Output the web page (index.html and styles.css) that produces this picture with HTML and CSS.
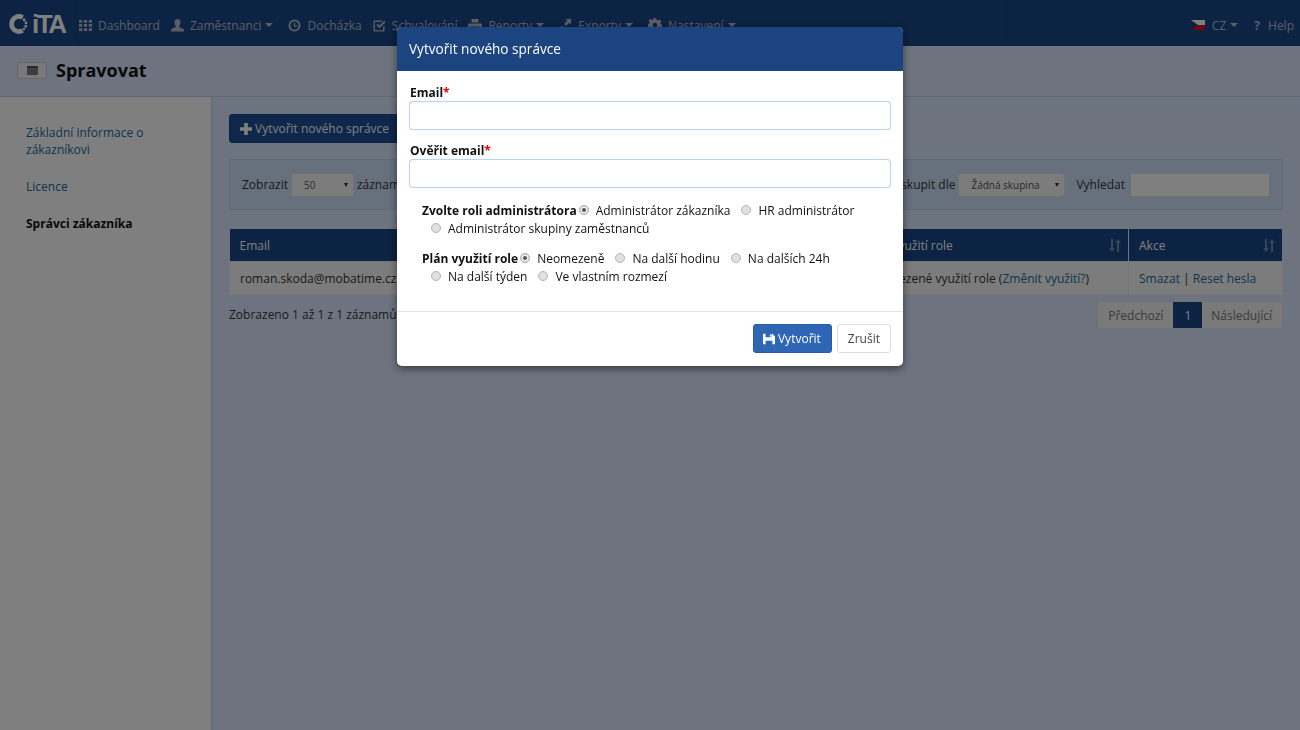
FILE: index.html
```html
<!DOCTYPE html>
<html lang="cs">

<head>
    <meta charset="UTF-8">
    <title>Spravovat</title>
    <link rel="stylesheet" href="styles.css">
</head>

<body>
    <nav class="topnav">
        <div class="brand">
            <svg class="brand-ring" viewBox="0 0 20 20" width="20" height="20">
                <path d="M13.800 3.500A7.500 7.500 0 1 0 13.800 16.500" fill="none" stroke="#fff" stroke-width="4.600" />
                <circle cx="15.200" cy="6" r="1.400" fill="#fff" />
                <circle cx="17" cy="9" r="1.400" fill="#fff" />
                <circle cx="16.800" cy="12.300" r="1.400" fill="#fff" />
                <circle cx="15" cy="15" r="1.200" fill="#fff" />
            </svg>
            <span class="brand-text">iTA</span>
        </div>
        <ul class="menu">
            <li>
                <svg class="ico" viewBox="0 0 12 12"><path d="M0 1h3v2.500H0zM4.500 1h3v2.500h-3zM9 1h3v2.500H9zM0 4.700h3v2.500H0zM4.500 4.700h3v2.500h-3zM9 4.700h3v2.500H9zM0 8.500h3V11H0zM4.500 8.500h3V11h-3zM9 8.500h3V11H9z" /></svg>
                Dashboard
            </li>
            <li>
                <svg class="ico" viewBox="0 0 14 14"><path d="M7 0c2 0 3.200 1.500 3.200 3.500S9 7.500 8.600 8.300c0 .8 5.400 1.600 5.400 3.700v1.500H0V12c0-2.100 5.400-2.900 5.400-3.700C5 7.500 3.800 5.500 3.800 3.500S5 0 7 0z" /></svg>
                Zaměstnanci <i class="caret"></i>
            </li>
            <li>
                <svg class="ico" viewBox="0 0 14 14"><path fill-rule="evenodd" d="M7 .5a6.500 6.500 0 1 1 0 13 6.500 6.500 0 0 1 0-13zm0 2a4.500 4.500 0 1 0 0 9 4.500 4.500 0 0 0 0-9zM6.300 4h1.400v3h2.300v1.300H6.300z" /></svg>
                Docházka
            </li>
            <li>
                <svg class="ico" viewBox="0 0 14 14"><path d="M2.500 1.500H10l-1.500 1.700h-6a.5.5 0 0 0-.5.500v7.800c0 .3.200.5.500.5h7.800c.3 0 .5-.2.500-.5V8.500L12.500 7v4.800c0 1-.8 1.700-1.700 1.700H2.200c-1 0-1.700-.7-1.700-1.700V3.200c0-1 .8-1.700 2-1.700z" /><path d="M3.500 6.500 5 5l2 2 5-5 1.500 1.500L7 10z" /></svg>
                Schvalování
            </li>
            <li>
                <svg class="ico ico-wide" viewBox="0 0 14 14"><path d="M3.500 1h7v3.500h-7zM0 5.500h14V11h-2.500V8.500h-9V11H0zM3.500 9.500h7V13h-7z" /></svg>
                Reporty <i class="caret"></i>
            </li>
            <li>
                <svg class="ico" viewBox="0 0 14 14"><path d="M7 0h6v6l-2-2-3.500 3.500-2-2L9 2zM1 8h4v2h5v3H1z" /></svg>
                Exporty <i class="caret"></i>
            </li>
            <li>
                <svg class="ico ico-wide" viewBox="0 0 14 14"><path fill-rule="evenodd" d="M5.800 0h2.400l.4 2 1.300.6 1.800-1.100 1.700 1.700-1.100 1.800.6 1.300 2 .4v2.400l-2 .4-.6 1.300 1.100 1.800-1.700 1.700-1.800-1.100-1.300.5-.4 2H5.800l-.4-2-1.300-.5-1.800 1.100L.6 12.100l1.100-1.800-.6-1.300-2-.4V6.200l2-.4.6-1.300L.6 2.700l1.700-1.700 1.800 1.100 1.300-.6zM7 4.800a2.200 2.200 0 1 0 0 4.400 2.200 2.200 0 0 0 0-4.400z" /></svg>
                Nastavení <i class="caret"></i>
            </li>
        </ul>
        <ul class="menu menu-right">
            <li class="lang-item">
                <svg class="flag" viewBox="0 0 14 10" width="14" height="10"><path fill="#fff" d="M0 0h14v5H0z" /><path fill="#d7141a" d="M0 5h14v5H0z" /><path fill="#11457e" d="M0 0l7 5-7 5z" /></svg>
                CZ <i class="caret"></i>
            </li>
            <li class="help-item"><b class="help-mark">?</b> Help</li>
        </ul>
    </nav>

    <header class="pagehead">
        <span class="pagehead-btn">
            <svg viewBox="0 0 11 9" width="11" height="9"><path fill="#505050" d="M0 0h11v2.500H0z" /><path fill="#787878" d="M0 2.500h11V9H0z" /></svg>
        </span>
        <h1>Spravovat</h1>
    </header>

    <div class="page">
        <aside class="side">
            <a class="side-link">Základní informace o zákazníkovi</a>
            <a class="side-link">Licence</a>
            <a class="side-link active">Správci zákazníka</a>
        </aside>

        <main class="content">
            <button class="btn-new" type="button">
                <svg viewBox="0 0 12 12" width="12" height="12"><path fill="#fff" d="M4.200 0h3.600v4.200H12v3.600H7.800V12H4.200V7.800H0V4.200h4.200z" /></svg>
                Vytvořit nového správce
            </button>

            <div class="filters">
                <label>Zobrazit</label>
                <span class="fake-select sel-small">50 <i class="sel-arrow"></i></span>
                <label>záznamů</label>
                <span class="filters-gap"></span>
                <label>Seskupit dle</label>
                <span class="fake-select sel-wide">Žádná skupina <i class="sel-arrow"></i></span>
                <label class="search-label">Vyhledat</label>
                <span class="search-box"></span>
            </div>

            <table class="grid">
                <thead>
                    <tr>
                        <th class="col-email">Email</th>
                        <th class="col-role"></th>
                        <th class="col-plan">
                            Plán využití role
                            <svg class="sort" viewBox="0 0 12 13" width="12" height="13"><path d="M2 0h2v9h2l-3 4-3-4h2zM8 13h2V4h2L9 0 6 4h2z" /></svg>
                        </th>
                        <th class="col-act">
                            Akce
                            <svg class="sort" viewBox="0 0 12 13" width="12" height="13"><path d="M2 0h2v9h2l-3 4-3-4h2zM8 13h2V4h2L9 0 6 4h2z" /></svg>
                        </th>
                    </tr>
                </thead>
                <tbody>
                    <tr>
                        <td>roman.skoda@mobatime.cz</td>
                        <td></td>
                        <td>Neomezené využití role (<a>Změnit využití?</a>)</td>
                        <td><a>Smazat</a> | <a>Reset hesla</a></td>
                    </tr>
                </tbody>
            </table>

            <div class="tablefoot">
                <span class="tableinfo">Zobrazeno 1 až 1 z 1 záznamů</span>
                <div class="pager">
                    <span class="pager-item">Předchozí</span>
                    <span class="pager-item current">1</span>
                    <span class="pager-item">Následující</span>
                </div>
            </div>
        </main>
    </div>

    <div class="backdrop"></div>

    <div class="modal">
        <div class="modal-head">Vytvořit nového správce</div>
        <form class="modal-body">
            <label class="field-label" for="eml">Email<span class="req">*</span></label>
            <input class="field" id="eml" type="email">
            <label class="field-label" for="eml2">Ověřit email<span class="req">*</span></label>
            <input class="field" id="eml2" type="email">

            <div class="radios">
                <div class="radio-row">
                    <b>Zvolte roli administrátora</b>
                    <label class="radio first"><i class="dot on"></i>Administrátor zákazníka</label>
                    <label class="radio"><i class="dot"></i>HR administrátor</label>
                </div>
                <div class="radio-row wrapped">
                    <label class="radio"><i class="dot"></i>Administrátor skupiny zaměstnanců</label>
                </div>
            </div>
            <div class="radios">
                <div class="radio-row">
                    <b>Plán využití role</b>
                    <label class="radio first"><i class="dot on"></i>Neomezeně</label>
                    <label class="radio"><i class="dot"></i>Na další hodinu</label>
                    <label class="radio"><i class="dot"></i>Na dalších 24h</label>
                </div>
                <div class="radio-row wrapped">
                    <label class="radio"><i class="dot"></i>Na další týden</label>
                    <label class="radio"><i class="dot"></i>Ve vlastním rozmezí</label>
                </div>
            </div>
        </form>
        <div class="modal-foot">
            <button class="btn-save" type="button">
                <svg viewBox="0 0 14 14" width="12" height="12"><path fill="#fff" fill-rule="evenodd" d="M0 1h11l3 3v9H0zm3 0v4h7V1zm5 .8h1.500v2.500H8zM3 9v4h8V9z" /></svg>
                Vytvořit
            </button>
            <button class="btn-cancel" type="button">Zrušit</button>
        </div>
    </div>
</body>

</html>
```

FILE: styles.css
```css
html,
body {
    height: 100%;
}

body {
    margin: 0;
    background-color: #dde9ff;
    font-family: 'Open Sans', sans-serif;
    font-size: 12px;
    color: #333;
    overflow: hidden;
}

a {
    color: #1a6a99;
}

/* top bar */

.topnav {
    display: flex;
    height: 46px;
    background-color: #1a4686;
}

.brand {
    display: flex;
    align-items: center;
    width: 73px;
    height: 46px;
    padding-left: 9px;
    box-sizing: border-box;
    border-right: 1px solid #1d4a8c;
    flex-shrink: 0;
}

.brand-ring {
    margin-top: 1px;
}

.brand-text {
    margin-left: 3px;
    margin-top: 1px;
    font-family: 'Liberation Sans', sans-serif;
    font-size: 26px;
    font-weight: bold;
    letter-spacing: -2.500px;
    line-height: 26px;
    color: #fff;
}

.menu {
    display: flex;
    align-items: center;
    list-style: none;
    margin: 0;
    padding: 4px 0 0 6px;
    color: #b4bccc;
}

.menu li {
    display: flex;
    align-items: center;
    margin-right: 11px;
    white-space: nowrap;
}

.menu-right {
    justify-content: flex-end;
    box-sizing: border-box;
    width: 299px;
    margin-left: auto;
    padding-left: 0;
    border-left: 1px solid #1d4a8c;
}

.menu-right .lang-item {
    margin-right: 12px;
}

.menu-right .help-item {
    margin-right: 6px;
}

.help-mark {
    margin-right: 8px;
    font-size: 12px;
}

.ico {
    width: 13px;
    height: 13px;
    margin-right: 6px;
    fill: #b4bccc;
}

.ico-wide {
    width: 14px;
    height: 14px;
}

.flag {
    margin-right: 7px;
}

.caret {
    width: 0;
    height: 0;
    margin-left: 4px;
    margin-right: 4px;
    border-top: 4px solid #b4bccc;
    border-left: 4px solid transparent;
    border-right: 4px solid transparent;
}

/* title strip */

.pagehead {
    display: flex;
    align-items: center;
    padding-left: 17px;
    padding-bottom: 2px;
    box-sizing: border-box;
    height: 51px;
    background-color: #dde9ff;
    border-bottom: 1px solid #bcd3f5;
}

.pagehead-btn {
    display: flex;
    align-items: center;
    justify-content: center;
    box-sizing: border-box;
    width: 30px;
    height: 17px;
    background-color: #f2f2f2;
    border: 1px solid #ccc;
    border-radius: 3px;
}

.pagehead h1 {
    margin: 0 0 0 9px;
    font-size: 18px;
    font-weight: 700;
    color: #111;
}

/* sidebar + content */

.page {
    display: flex;
    height: calc(100% - 97px);
}

.side {
    width: 212px;
    box-sizing: border-box;
    padding: 27px 50px 0 26px;
    background-color: #fff;
    border-right: 1px solid #bcd3f5;
    flex-shrink: 0;
}

.side-link {
    display: block;
    margin-bottom: 20px;
    line-height: 17px;
}

.side-link.active {
    font-weight: 700;
    color: #111;
}

.content {
    flex: 1;
    min-width: 0;
    padding: 17px 17px 0 17px;
}

.btn-new {
    display: flex;
    align-items: center;
    height: 29px;
    padding: 0 10px;
    background-color: #1d4e96;
    border: 1px solid #1a4686;
    border-radius: 3px;
    font-family: inherit;
    font-size: 12px;
    color: #fff;
}

.btn-new svg {
    margin-right: 3px;
}

.filters {
    display: flex;
    align-items: center;
    height: 51px;
    box-sizing: border-box;
    margin-top: 16px;
    padding: 0 12px 0 12px;
    background-color: #cfe0fa;
    border: 1px solid #bcd3f5;
}

.filters-gap {
    flex: 1;
}

.fake-select {
    display: flex;
    align-items: center;
    justify-content: space-between;
    box-sizing: border-box;
    height: 24px;
    margin: 0 3px;
    padding: 0 5px 0 12px;
    background-color: #f8f8f8;
    border: 1px solid #e2e2e2;
    border-radius: 3px;
    font-size: 10px;
    color: #555;
}

.sel-small {
    width: 63px;
}

.sel-wide {
    width: 107px;
}

.sel-arrow {
    width: 0;
    height: 0;
    border-top: 4px solid #333;
    border-left: 2.500px solid transparent;
    border-right: 2.500px solid transparent;
}

.search-label {
    margin-left: 8px;
}

.search-box {
    width: 140px;
    height: 24px;
    box-sizing: border-box;
    margin-left: 5px;
    background-color: #fff;
    border: 1px solid #e2e2e2;
    border-radius: 3px;
}

.grid {
    width: 100%;
    table-layout: fixed;
    border-collapse: collapse;
    margin-top: 19px;
}

.grid th {
    position: relative;
    height: 32px;
    padding: 0 10px;
    background-color: #1a4686;
    border-right: 1px solid #dde9ff;
    font-weight: 400;
    text-align: left;
    color: #fff;
}

.grid td {
    height: 32px;
    padding: 0 10px;
    background-color: #f9f9f9;
    border: 1px solid #e8edf5;
    white-space: nowrap;
    overflow: hidden;
}

.col-email {
    width: 179px;
}

.col-plan {
    width: 253px;
}

.col-act {
    width: 133px;
}

.sort {
    position: absolute;
    right: 7px;
    top: 10px;
    fill: #6a8ab5;
}

.tablefoot {
    display: flex;
    align-items: center;
    justify-content: space-between;
    margin-top: 6px;
}

.tableinfo {
    padding-bottom: 2px;
}

.pager {
    display: flex;
    height: 28px;
    box-sizing: border-box;
    background-color: #f4f4f4;
    border: 1px solid #e2e2e2;
    border-radius: 3px;
}

.pager-item {
    display: flex;
    align-items: center;
    padding: 0 10px;
    color: #777;
}

.pager-item.current {
    padding: 0 11px;
    background-color: #1a4686;
    color: #fff;
}

.current + .pager-item {
    padding-left: 9px;
}

/* dialog */

.backdrop {
    position: fixed;
    inset: 0;
    background-color: rgba(0, 0, 0, 0.5);
}

.modal {
    position: fixed;
    top: 27px;
    left: 397px;
    width: 506px;
    background-color: #fff;
    border-radius: 5px;
    box-shadow: 0 3px 9px rgba(0, 0, 0, 0.5);
    color: #111;
}

.modal-head {
    height: 44px;
    padding: 0 12px;
    line-height: 43px;
    background-color: #1b4480;
    border-radius: 5px 5px 0 0;
    font-size: 13.600px;
    color: #fff;
}

.modal-body {
    padding: 13px 12px 26px;
}

.field-label {
    display: block;
    padding-left: 1px;
    font-weight: 700;
    line-height: 17px;
    color: #111;
}

.req {
    color: #e00;
}

.field {
    display: block;
    width: 100%;
    height: 29px;
    box-sizing: border-box;
    margin: 0 0 12px;
    background-color: #fff;
    border: 1px solid #bcd3f5;
    border-radius: 4px;
    box-shadow: 0 0 1px #bcd3f5;
}

.radios {
    padding-left: 13px;
    margin-top: 12px;
}

.radios:first-of-type {
    margin-top: 13px;
}

.radio-row {
    display: flex;
    align-items: center;
    height: 18px;
}

.radio-row.wrapped {
    padding-left: 9px;
}

.radio {
    display: flex;
    align-items: center;
    margin-right: 11px;
    white-space: nowrap;
}

.radio.first {
    margin-left: 2px;
}

.dot {
    box-sizing: border-box;
    width: 10px;
    height: 10px;
    margin-right: 7px;
    background-color: #e0e0e0;
    border: 1px solid #b5b5b5;
    border-radius: 50%;
}

.dot.on {
    background-color: #555;
    box-shadow: inset 0 0 0 2px #ececec;
}

.modal-foot {
    display: flex;
    justify-content: flex-end;
    gap: 5px;
    padding: 12px 12px 13px;
    border-top: 1px solid #e5e5e5;
}

.btn-save,
.btn-cancel {
    display: flex;
    align-items: center;
    height: 29px;
    padding: 0 10px;
    border-radius: 3px;
    font-family: inherit;
    font-size: 12px;
}

.btn-save {
    padding-left: 9px;
    background-color: #2e65b5;
    border: 1px solid #2a5ca6;
    color: #fff;
}

.btn-save svg {
    margin-right: 3px;
}

.btn-cancel {
    background-color: #fff;
    border: 1px solid #ddd;
    color: #444;
}
```
